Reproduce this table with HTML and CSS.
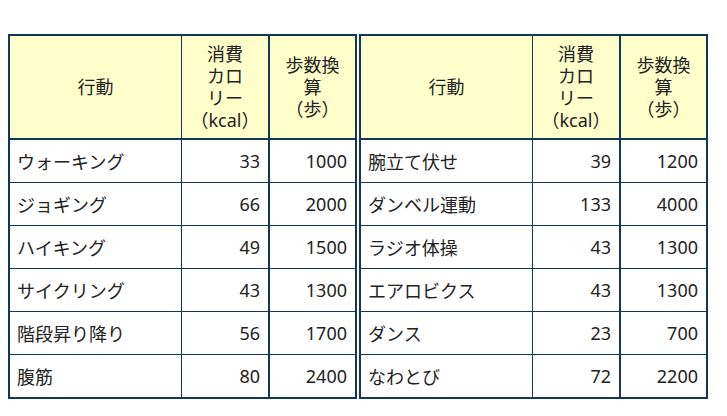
FILE: index.html
```html
<!DOCTYPE html>
<html lang="ja">
<head>
<meta charset="utf-8">
<link rel="stylesheet" href="styles.css">
</head>
<body>
<div class="wrap">
  <table class="tbl">
    <thead>
      <tr class="head">
        <th class="c1">行動</th>
        <th class="c2">消費<br>カロ<br>リー<br>（kcal）</th>
        <th class="c3">歩数換<br>算<br>（歩）</th>
      </tr>
    </thead>
    <tbody>
      <tr><td class="c1">ウォーキング</td><td class="c2 num">33</td><td class="c3 num">1000</td></tr>
      <tr><td class="c1">ジョギング</td><td class="c2 num">66</td><td class="c3 num">2000</td></tr>
      <tr><td class="c1">ハイキング</td><td class="c2 num">49</td><td class="c3 num">1500</td></tr>
      <tr><td class="c1">サイクリング</td><td class="c2 num">43</td><td class="c3 num">1300</td></tr>
      <tr><td class="c1">階段昇り降り</td><td class="c2 num">56</td><td class="c3 num">1700</td></tr>
      <tr><td class="c1">腹筋</td><td class="c2 num">80</td><td class="c3 num">2400</td></tr>
    </tbody>
  </table>
  <table class="tbl">
    <thead>
      <tr class="head">
        <th class="c1">行動</th>
        <th class="c2">消費<br>カロ<br>リー<br>（kcal）</th>
        <th class="c3">歩数換<br>算<br>（歩）</th>
      </tr>
    </thead>
    <tbody>
      <tr><td class="c1">腕立て伏せ</td><td class="c2 num">39</td><td class="c3 num">1200</td></tr>
      <tr><td class="c1">ダンベル運動</td><td class="c2 num">133</td><td class="c3 num">4000</td></tr>
      <tr><td class="c1">ラジオ体操</td><td class="c2 num">43</td><td class="c3 num">1300</td></tr>
      <tr><td class="c1">エアロビクス</td><td class="c2 num">43</td><td class="c3 num">1300</td></tr>
      <tr><td class="c1">ダンス</td><td class="c2 num">23</td><td class="c3 num">700</td></tr>
      <tr><td class="c1">なわとび</td><td class="c2 num">72</td><td class="c3 num">2200</td></tr>
    </tbody>
  </table>
</div>
</body>
</html>
```
FILE: styles.css
```css
html, body {
  margin: 0;
  padding: 0;
  background: #ffffff;
}
body {
  font-family: "Noto Sans", "Noto Sans CJK JP", sans-serif;
  font-size: 18px;
  color: #222222;
}
.wrap {
  display: flex;
  gap: 2px;
  padding: 34px 0 0 8px;
}
.tbl {
  border-collapse: separate;
  border-spacing: 0;
  border: 2px solid #13375a;
  width: 348px;
  table-layout: fixed;
}
.tbl th,
.tbl td {
  padding: 0;
  border-color: #13375a;
  border-style: solid;
  border-width: 0;
}
.tbl .c1 { width: 171px; }
.tbl .c2 { width: 86px; border-left-width: 1px; }
.tbl .c3 { width: 85px; border-left-width: 2px; }
.tbl .head th {
  background: #ffffcc;
  font-weight: normal;
  height: 102px;
  line-height: 22px;
  text-align: center;
  vertical-align: middle;
  border-bottom-width: 2px;
}
.tbl tbody td {
  height: 42px;
  vertical-align: middle;
  padding: 0 8px;
  border-top-width: 1px;
}
.tbl tbody tr:first-child td {
  border-top-width: 0;
}
.tbl tbody td.c1 {
  padding-left: 7px;
}
.tbl .num {
  text-align: right;
}
```
